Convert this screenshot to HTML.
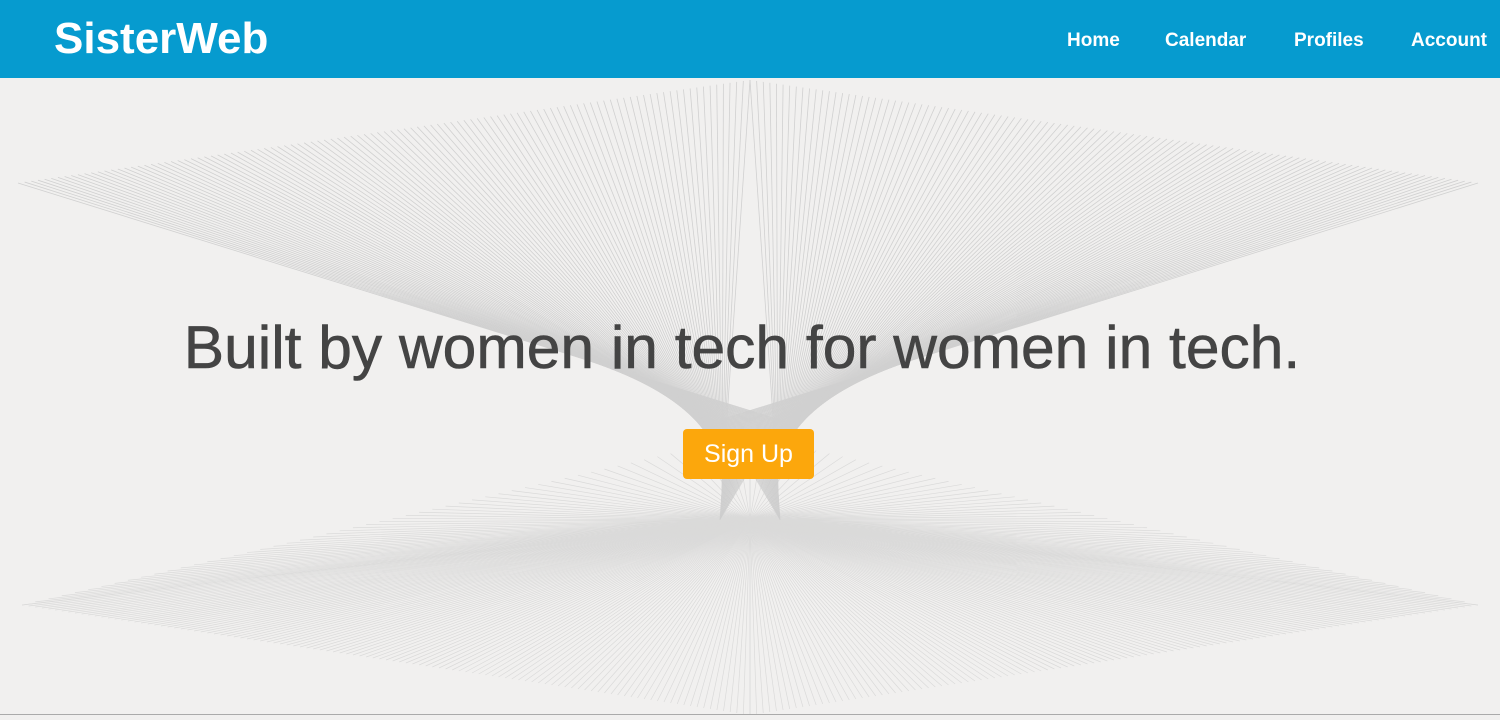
<!DOCTYPE html>
<html><head><style>
body{margin:0;width:1500px;height:720px;overflow:hidden;background:#f1f0ef;font-family:"Liberation Sans",Arial,sans-serif;position:relative}
.nav{position:absolute;top:0;left:0;width:1500px;height:78px;background:#069bcf;color:#fff}
.logo{position:absolute;left:54px;top:14px;font-size:44px;font-weight:bold}
.nav a{position:absolute;top:30px;font-size:19px;font-weight:bold;color:#fff;text-decoration:none}
svg{position:absolute;left:0;top:78px}
h1{position:absolute;top:312px;left:0;width:1484px;text-align:center;margin:0;font-size:60.5px;font-weight:normal;color:#444;-webkit-text-stroke:0.6px #444}
.btn{position:absolute;left:683px;top:429px;width:131px;height:50px;background:#fca70c;border-radius:4px;color:#fff;font-size:25px;text-align:center;line-height:51px}
.bl{position:absolute;left:0;top:714px;width:1500px;height:1px;background:#aaa}
</style></head><body>
<svg id="s" width="1500" height="636" viewBox="0 78 1500 636"></svg>
<div class="nav"><div class="logo">SisterWeb</div>
<a style="left:1067px">Home</a><a style="left:1165px">Calendar</a><a style="left:1294px">Profiles</a><a style="left:1411px">Account</a></div>
<h1>Built by women in tech for women in tech.</h1>
<div class="btn">Sign Up</div>
<div class="bl"></div>
<script>
var s=document.getElementById('s'),h='',g='';
function L(a,b,c,d){h+='<line x1="'+a+'" y1="'+b+'" x2="'+c+'" y2="'+d+'"/>';}
function M(a,b,c,d){g+='<line x1="'+a+'" y1="'+b+'" x2="'+c+'" y2="'+d+'"/>';}
var N=110;
for(var i=0;i<=N;i++){var t=i/N;
L(18+t*732,183-t*103,780-t*60,420+t*100);
L(1478-t*728,183-t*103,720+t*60,420+t*100);
M(22+t*728,605+t*110,750,520);
M(1478-t*728,605+t*110,750,520);
if(i%2==0){M(22+t*728,605-t*170,750,520);
M(1478-t*728,605-t*170,750,520);}
}
s.innerHTML='<g stroke="#c9c9c9" stroke-width="0.8" opacity="0.8">'+h+'</g><g stroke="#cccccc" stroke-width="0.7" opacity="0.6">'+g+'</g>';
</script>
</body></html>
